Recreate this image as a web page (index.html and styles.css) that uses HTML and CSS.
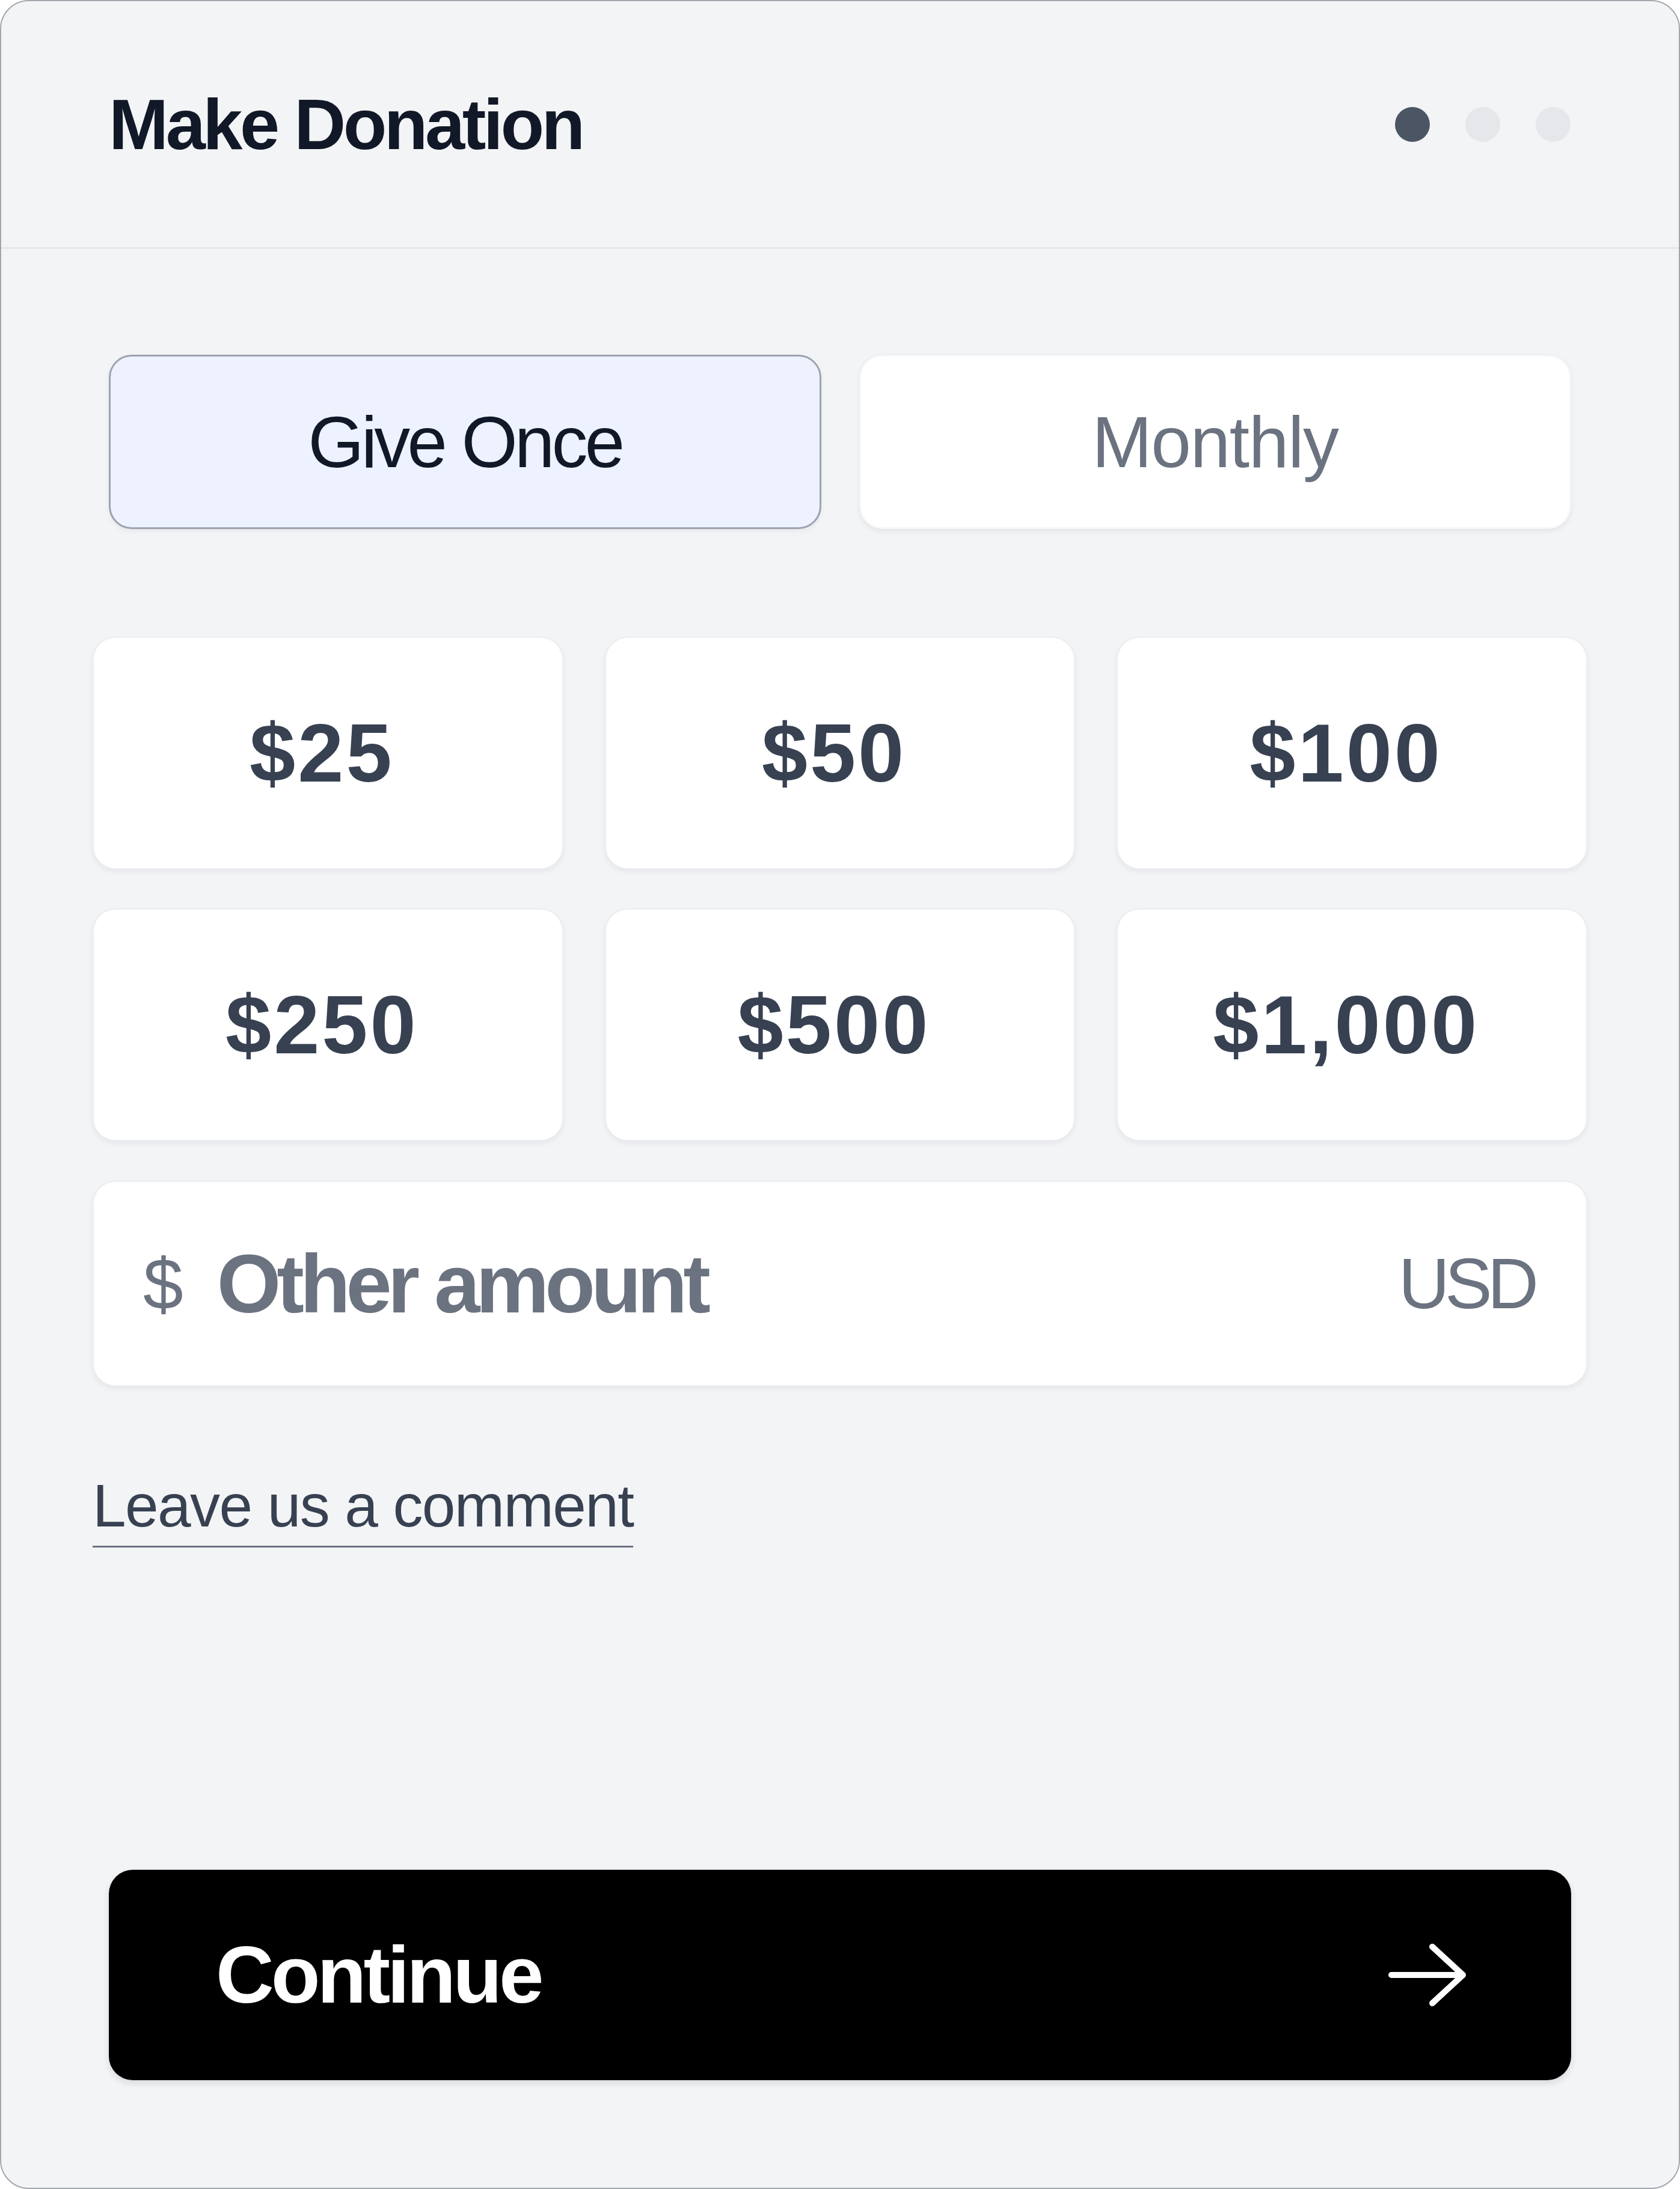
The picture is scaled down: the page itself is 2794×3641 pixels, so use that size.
FILE: index.html
```html
<!DOCTYPE html>
<html lang="en">
<head>
<meta charset="utf-8">
<title>Make Donation</title>
<link rel="stylesheet" href="styles.css">
</head>
<body>
<div class="card">
  <header class="header">
    <h1 class="title">Make Donation</h1>
    <div class="steps">
      <span class="dot dot-active"></span>
      <span class="dot"></span>
      <span class="dot"></span>
    </div>
  </header>
  <main class="body">
    <div class="tabs">
      <button class="tab tab-active">Give Once</button>
      <button class="tab tab-monthly">Monthly</button>
    </div>
    <div class="amounts">
      <button class="amount">$25</button>
      <button class="amount">$50</button>
      <button class="amount">$100</button>
      <button class="amount">$250</button>
      <button class="amount">$500</button>
      <button class="amount">$1,000</button>
    </div>
    <div class="other">
      <span class="other-sign">$</span>
      <span class="other-label">Other amount</span>
      <span class="other-currency">USD</span>
    </div>
    <a class="comment">Leave us a comment</a>
    <button class="continue">
      <span class="continue-label">Continue</span>
      <svg class="continue-arrow" width="130" height="104" viewBox="0 0 130 104" aria-hidden="true">
        <path d="M5 52 H124 M73 5 L124 52 L73 99" fill="none" stroke="#ffffff" stroke-width="10" stroke-linecap="round" stroke-linejoin="round"/>
      </svg>
    </button>
  </main>
</div>
</body>
</html>
```

FILE: styles.css
```css
html, body {
  margin: 0;
  padding: 0;
  background: #ffffff;
}

body {
  font-family: "Liberation Sans", Arial, sans-serif;
}

.card {
  box-sizing: border-box;
  width: 2794px;
  height: 3641px;
  border: 2px solid #a3a6ad;
  border-radius: 48px;
  background: #f3f4f6;
  display: flex;
  flex-direction: column;
  overflow: hidden;
}

.header {
  box-sizing: border-box;
  height: 412px;
  padding: 0 180px 0 179px;
  display: flex;
  align-items: center;
  justify-content: space-between;
  border-bottom: 3px solid #e5e7eb;
}

.title {
  margin: 0;
  font-size: 119px;
  font-weight: 700;
  letter-spacing: -4.5px;
  color: #111827;
  line-height: 1;
}

.steps {
  display: flex;
  gap: 59px;
}

.dot {
  width: 58px;
  height: 58px;
  border-radius: 50%;
  background: #e5e7eb;
}

.dot-active {
  background: #4b5563;
}

.body {
  flex: 1;
  display: flex;
  flex-direction: column;
  padding: 176px 152px 179px;
}

button {
  font-family: inherit;
  cursor: pointer;
}

.tabs {
  margin: 0 27px;
  display: grid;
  grid-template-columns: 1fr 1fr;
  gap: 63px;
}

.tab {
  box-sizing: border-box;
  height: 290px;
  border-radius: 38px;
  font-size: 120px;
  font-weight: 400;
  display: flex;
  align-items: center;
  justify-content: center;
  padding: 0;
}

.tab-active {
  background: #eef2ff;
  border: 3px solid #9ca3af;
  color: #111827;
  letter-spacing: -5px;
  box-shadow: 0 4px 10px rgba(17, 24, 39, 0.05);
}

.tab-monthly {
  background: #ffffff;
  border: 3px solid #f6f7f9;
  color: #6b7280;
  letter-spacing: -1.5px;
  box-shadow: 0 4px 10px rgba(17, 24, 39, 0.06), 0 0 0 1px rgba(17, 24, 39, 0.03);
}

.amounts {
  margin-top: 179px;
  display: grid;
  grid-template-columns: repeat(3, 1fr);
  grid-auto-rows: 387px;
  column-gap: 69px;
  row-gap: 65px;
}

.amount {
  box-sizing: border-box;
  background: #ffffff;
  border: 2px solid #eceef1;
  border-radius: 38px;
  box-shadow: 0 4px 10px rgba(17, 24, 39, 0.06);
  font-size: 137px;
  font-weight: 700;
  color: #374151;
  letter-spacing: 4px;
  display: flex;
  align-items: center;
  justify-content: center;
  padding: 0 20px 0 0;
}

.other {
  box-sizing: border-box;
  margin-top: 66px;
  height: 342px;
  background: #ffffff;
  border: 2px solid #eceef1;
  border-radius: 38px;
  box-shadow: 0 4px 10px rgba(17, 24, 39, 0.06);
  display: flex;
  align-items: center;
  padding: 0 87px 0 82px;
  color: #6b7280;
}

.other-sign {
  font-size: 120px;
  font-weight: 400;
  line-height: 1;
}

.other-label {
  margin-left: 56px;
  font-size: 137px;
  font-weight: 700;
  letter-spacing: -7px;
  line-height: 1;
}

.other-currency {
  margin-left: auto;
  font-size: 118px;
  font-weight: 400;
  letter-spacing: -8px;
  line-height: 1;
}

.comment {
  align-self: flex-start;
  margin-top: 138px;
  font-size: 100px;
  line-height: 120px;
  letter-spacing: -1.6px;
  color: #374151;
  padding-bottom: 7px;
  border-bottom: 3px solid #6b7280;
  text-decoration: none;
}

.continue {
  box-sizing: border-box;
  margin: auto 27px 0;
  height: 350px;
  border: none;
  border-radius: 40px;
  background: #000000;
  box-shadow: 0 5px 12px rgba(17, 24, 39, 0.12);
  display: flex;
  align-items: center;
  justify-content: space-between;
  padding: 0 174px 0 178px;
}

.continue-label {
  font-size: 134px;
  font-weight: 700;
  letter-spacing: -5px;
  color: #ffffff;
  line-height: 1;
}

.continue-arrow {
  display: block;
}
```
